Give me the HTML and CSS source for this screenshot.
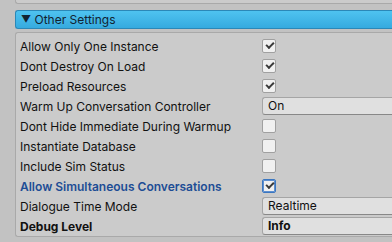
FILE: index.html
```html
<!DOCTYPE html>
<html>
<head>
<meta charset="utf-8">
<link rel="stylesheet" href="styles.css">
</head>
<body>
<div class="top-box"></div>
<div class="section-header"><span class="arrow">▼</span> Other Settings</div>
<div class="panel">
  <div class="row"><span class="label">Allow Only One Instance</span><span class="check on"></span></div>
  <div class="row"><span class="label">Dont Destroy On Load</span><span class="check on"></span></div>
  <div class="row"><span class="label">Preload Resources</span><span class="check on"></span></div>
  <div class="row"><span class="label">Warm Up Conversation Controller</span><span class="dropdown">On</span></div>
  <div class="row"><span class="label">Dont Hide Immediate During Warmup</span><span class="check"></span></div>
  <div class="row"><span class="label">Instantiate Database</span><span class="check"></span></div>
  <div class="row"><span class="label">Include Sim Status</span><span class="check"></span></div>
  <div class="row"><span class="label blue">Allow Simultaneous Conversations</span><span class="check on focus"></span></div>
  <div class="row"><span class="label">Dialogue Time Mode</span><span class="dropdown">Realtime</span></div>
  <div class="row"><span class="label bold">Debug Level</span><span class="dropdown bold">Info</span></div>
</div>
</body>
</html>
```
FILE: styles.css
```css
html, body {
  margin: 0;
  padding: 0;
  background: #c2c2c2;
  width: 392px;
  height: 242px;
  overflow: hidden;
  font-family: Inter, "Noto Sans", sans-serif;
  font-size: 12px;
  color: #111;
}
.top-box {
  margin-left: 15px;
  margin-top: -6px;
  height: 8px;
  border: 1px solid #a9a9a9;
  border-right: none;
  border-radius: 0 0 0 3px;
  background: #cbcbcb;
}
.section-header {
  margin: 6px 0 0 15px;
  height: 17px;
  line-height: 17px;
  padding-left: 5px;
  border: 1px solid #2b88b8;
  border-right: none;
  border-radius: 3px 0 0 3px;
  background: linear-gradient(#4fc3f0, #35aadf);
  color: #122331;
}
.arrow {
  font-size: 10px;
  position: relative;
  top: -1px;
}
.panel {
  margin: 3px 0 0 15px;
  height: 200px;
  padding: 3px 0 0 4px;
  border: 1px solid #a9a9a9;
  border-right: none;
  border-radius: 3px 0 0 3px;
  background: #cbcbcb;
  display: flex;
  flex-direction: column;
}
.row {
  height: 20px;
  display: flex;
  align-items: center;
}
.label {
  width: 242px;
  flex: none;
}
.label.blue {
  color: #1d4d95;
  font-weight: 600;
}
.bold {
  font-weight: 700;
}
.check {
  width: 12px;
  height: 12px;
  border: 1px solid #a0a0a0;
  border-radius: 2px;
  background: #f0f0f0;
  position: relative;
}
.check.on::after {
  content: "";
  position: absolute;
  left: 3px;
  top: 2px;
  width: 6px;
  height: 3px;
  border-left: 2px solid #3a3a3a;
  border-bottom: 2px solid #3a3a3a;
  transform: rotate(-45deg);
}
.check.focus {
  border-color: #3a76c0;
  box-shadow: 0 0 0 1px #5e8fd0 inset;
}
.dropdown {
  flex: 1;
  height: 16px;
  line-height: 16px;
  padding-left: 5px;
  border: 1px solid #a5a5a5;
  border-bottom-color: #888;
  border-right: none;
  border-radius: 3px 0 0 3px;
  background: #e0e0e0;
}
```
